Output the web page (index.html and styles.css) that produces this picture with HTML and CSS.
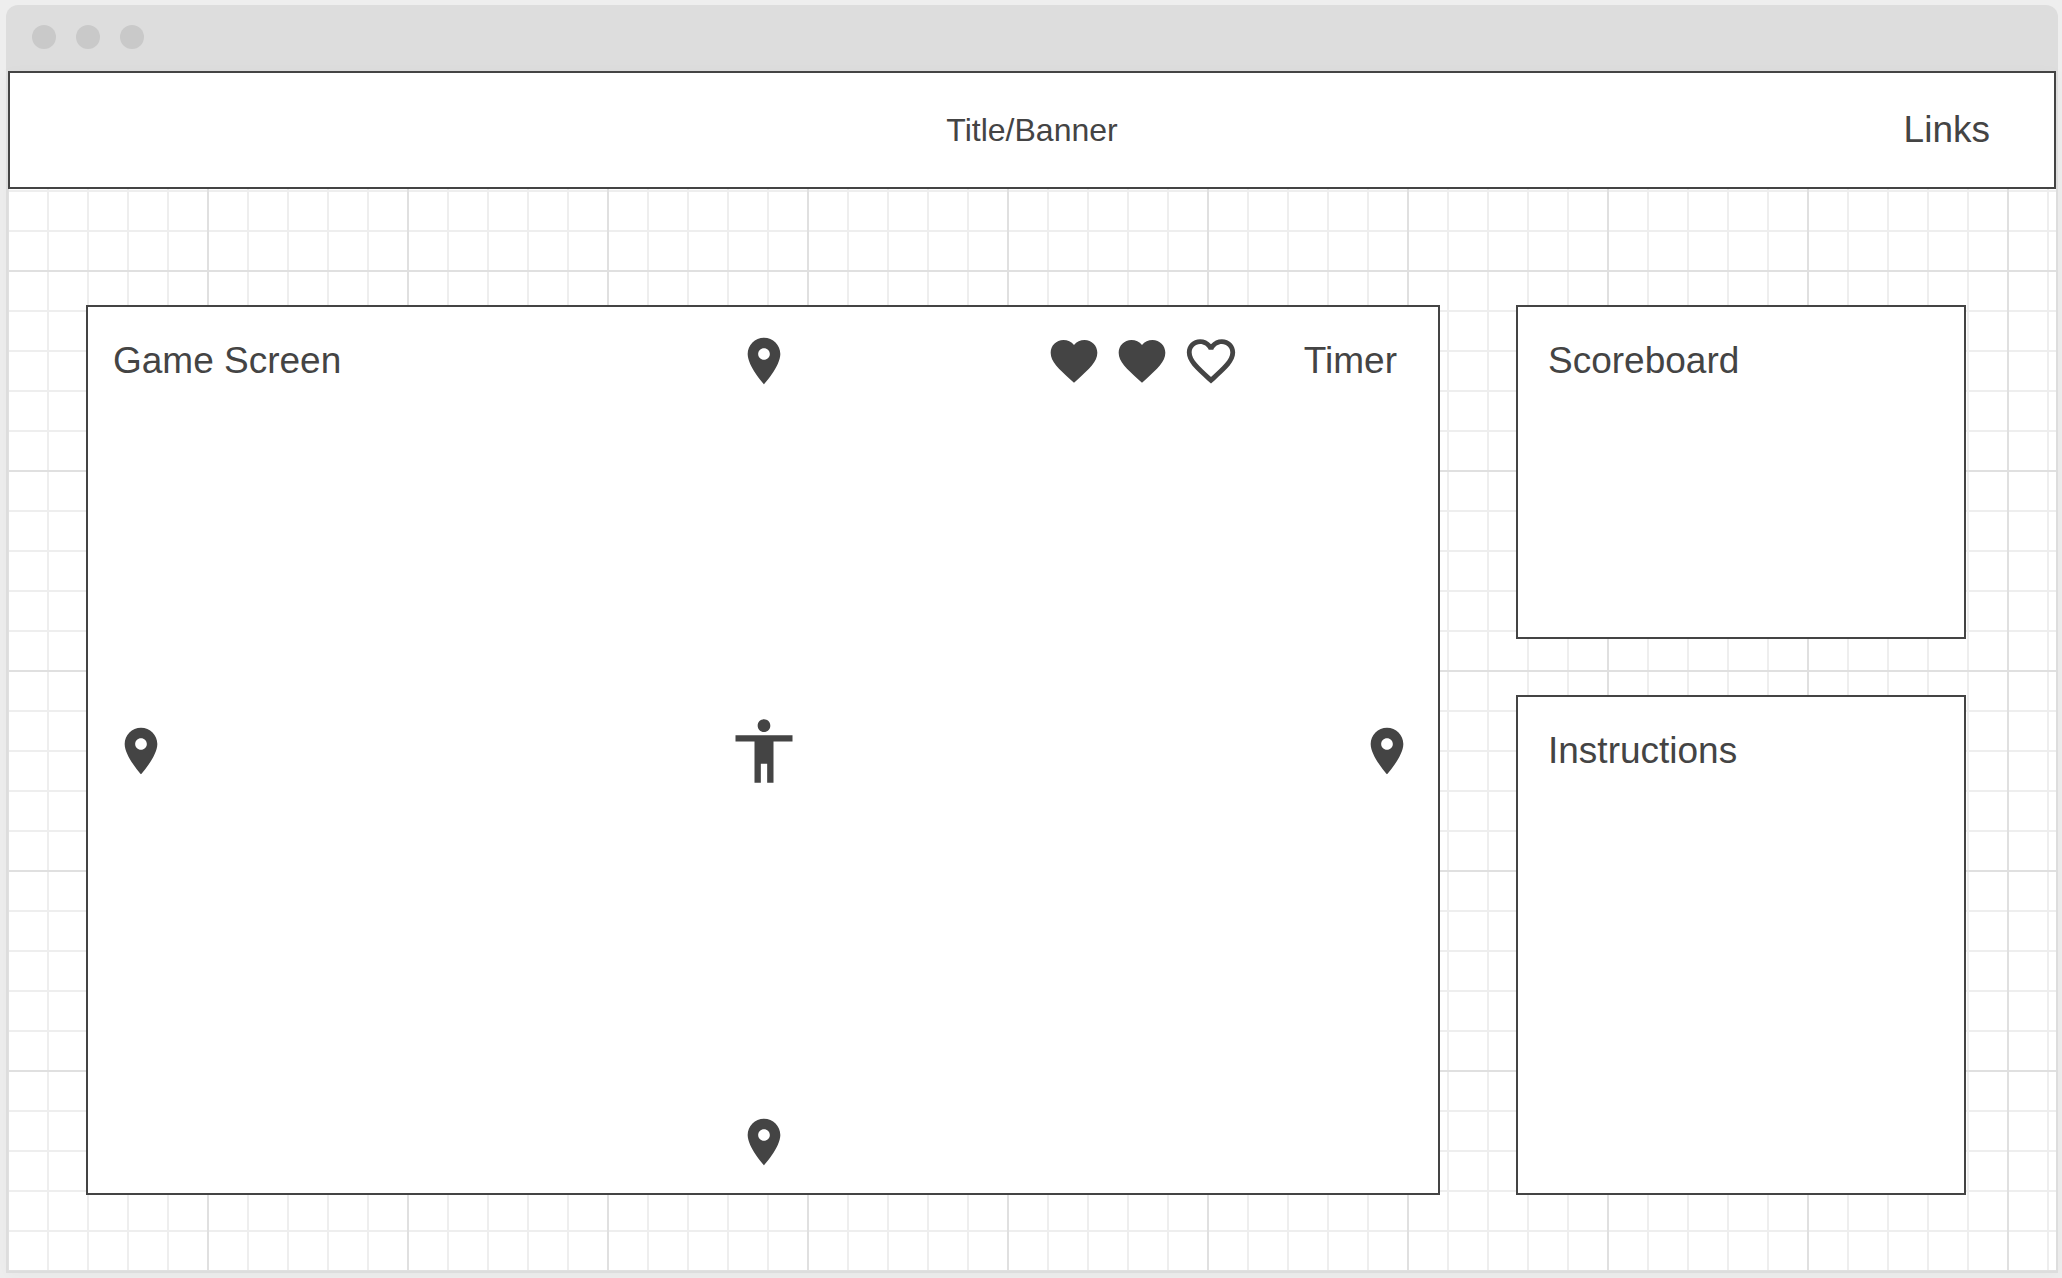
FILE: index.html
```
<!DOCTYPE html>
<html lang="en">
<head>
<meta charset="utf-8">
<meta name="viewport" content="width=device-width, initial-scale=1">
<title>Title/Banner</title>
<link rel="stylesheet" href="styles.css">
</head>
<body>
<svg class="sprite" aria-hidden="true">
  <symbol id="pin" viewBox="0 0 24 24"><path d="M12 2C8.13 2 5 5.13 5 9c0 5.25 7 13 7 13s7-7.75 7-13c0-3.87-3.13-7-7-7zm0 9.5c-1.38 0-2.5-1.12-2.5-2.5s1.12-2.5 2.5-2.5 2.5 1.12 2.5 2.5-1.12 2.5-2.5 2.5z"/></symbol>
  <symbol id="heart" viewBox="0 0 24 24"><path d="M12 21.35l-1.45-1.32C5.4 15.36 2 12.28 2 8.5 2 5.42 4.42 3 7.5 3c1.74 0 3.41.81 4.5 2.09C13.09 3.81 14.76 3 16.5 3 19.58 3 22 5.42 22 8.5c0 3.78-3.4 6.86-8.55 11.54L12 21.35z"/></symbol>
  <symbol id="heart-empty" viewBox="0 0 24 24"><path d="M16.5 3c-1.74 0-3.41.81-4.5 2.09C10.91 3.81 9.24 3 7.5 3 4.42 3 2 5.42 2 8.5c0 3.78 3.4 6.86 8.55 11.54L12 21.35l1.45-1.32C18.6 15.36 22 12.28 22 8.5 22 5.42 19.58 3 16.5 3zm-4.4 15.55l-.1.1-.1-.1C7.14 14.24 4 11.39 4 8.5 4 6.5 5.5 5 7.5 5c1.54 0 3.04.99 3.57 2.36h1.87C13.46 5.99 14.96 5 16.5 5c2 0 3.5 1.5 3.5 3.5 0 2.89-3.14 5.74-7.9 10.05z"/></symbol>
  <symbol id="person" viewBox="0 0 24 24"><path d="M12 2c1.1 0 2 .9 2 2s-.9 2-2 2-2-.9-2-2 .9-2 2-2zm9 7h-6v13h-2v-6h-2v6H9V9H3V7h18v2z"/></symbol>
</svg>
<div class="window">
  <div class="titlebar">
    <span class="dot"></span>
    <span class="dot"></span>
    <span class="dot"></span>
  </div>
  <div class="content">
    <header class="banner">
      <h1 class="banner-title">Title/Banner</h1>
      <nav class="banner-nav"><a class="label" href="#links">Links</a></nav>
    </header>
    <main class="stage">
      <section class="panel game">
        <div class="row">
          <h2 class="label">Game Screen</h2>
          <svg class="icon" aria-hidden="true"><use href="#pin"/></svg>
          <div class="status">
            <div class="lives" role="img" aria-label="2 of 3 lives">
              <svg class="icon"><use href="#heart"/></svg>
              <svg class="icon"><use href="#heart"/></svg>
              <svg class="icon icon-outline"><use href="#heart-empty"/></svg>
            </div>
            <span class="label">Timer</span>
          </div>
        </div>
        <div class="row">
          <svg class="icon" aria-hidden="true"><use href="#pin"/></svg>
          <svg class="icon icon-player" aria-hidden="true"><use href="#person"/></svg>
          <svg class="icon icon-end" aria-hidden="true"><use href="#pin"/></svg>
        </div>
        <div class="row row-single">
          <svg class="icon" aria-hidden="true"><use href="#pin"/></svg>
        </div>
      </section>
      <aside class="side">
        <section class="panel card"><h2 class="label">Scoreboard</h2></section>
        <section class="panel card"><h2 class="label">Instructions</h2></section>
      </aside>
    </main>
  </div>
</div>
</body>
</html>
```
FILE: styles.css
```
:root {
  --ink: #444;
  --chrome: #ddd;
  --line: #eee;
  --line-major: #e0e0e0;
}

* {
  box-sizing: border-box;
}

body {
  margin: 0;
  min-height: 100vh;
  padding: 5px 4px 5px 6px;
  display: flex;
  background: #eee;
  color: var(--ink);
  font-family: "Liberation Sans", Arial, sans-serif;
}

.sprite {
  position: absolute;
  width: 0;
  height: 0;
}

.window {
  flex: 1;
  display: flex;
  flex-direction: column;
}

.titlebar {
  display: flex;
  gap: 20px;
  padding: 20px 26px 22px;
  background: var(--chrome);
  border-radius: 12px 12px 0 0;
}

.dot {
  width: 24px;
  height: 24px;
  border-radius: 50%;
  background: #c9c9c9;
}

/* Minor lines every 40px, major lines every 200px */
.content {
  flex: 1;
  display: flex;
  flex-direction: column;
  border: 2px solid var(--chrome);
  border-top: 0;
  background-color: #fff;
  background-image:
    linear-gradient(to right, var(--line-major) 2px, transparent 2px),
    linear-gradient(to bottom, var(--line-major) 2px, transparent 2px),
    linear-gradient(to right, var(--line) 2px, transparent 2px),
    linear-gradient(to bottom, var(--line) 2px, transparent 2px);
  background-size: 200px 200px, 200px 200px, 40px 40px, 40px 40px;
  background-position: -1px -1px;
  box-shadow: 0 4px 16px rgba(0, 0, 0, 0.03);
}

.banner {
  display: grid;
  grid-template-columns: 1fr auto 1fr;
  align-items: center;
  min-height: 118px;
  border: 2px solid var(--ink);
  background: #fff;
}

.banner-title {
  grid-column: 2;
  margin: 0;
  font-size: 32px;
  font-weight: 400;
  line-height: 36px;
}

.banner-nav {
  justify-self: end;
  padding-right: 64px;
}

.label {
  margin: 0;
  color: inherit;
  font-size: 37px;
  font-weight: 400;
  line-height: 42px;
  text-decoration: none;
}

.stage {
  flex: 1;
  display: grid;
  grid-template-columns: 1fr 450px;
  gap: 76px;
  padding: 116px 90px 76px 78px;
}

.panel {
  border: 2px solid var(--ink);
  background: #fff;
}

.game {
  display: grid;
  grid-template-rows: 1fr auto 1fr;
  padding: 25px 23px 23px 25px;
}

.row {
  display: grid;
  grid-template-columns: 1fr auto 1fr;
  align-items: center;
  align-self: start;
}

.row-single {
  grid-template-columns: auto;
  justify-content: center;
  align-self: end;
}

.status {
  display: flex;
  align-items: center;
  justify-content: flex-end;
  gap: 64px;
  padding-right: 18px;
}

.lives {
  display: flex;
  align-items: center;
  gap: 12px;
}

.icon {
  display: block;
  width: 56px;
  height: 56px;
  fill: currentColor;
}

.icon-outline {
  width: 58px;
  height: 58px;
}

.icon-player {
  width: 76px;
  height: 76px;
}

.icon-end {
  justify-self: end;
}

.side {
  display: grid;
  grid-template-rows: 2fr 3fr;
  gap: 56px;
}

.card {
  padding: 33px 30px;
}
```
